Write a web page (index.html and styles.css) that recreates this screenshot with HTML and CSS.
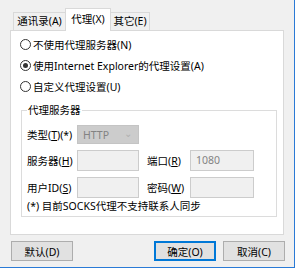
FILE: index.html
```html
<!DOCTYPE html>
<html lang="zh-CN">
<head>
<meta charset="UTF-8">
<title>代理设置</title>
<link rel="stylesheet" href="styles.css">
</head>
<body>

<div class="window">
<div class="tabs">
<div class="tab tab-first">通讯录(A)</div>
<div class="tab tab-active">代理(X)</div>
<div class="tab tab-last">其它(E)</div>
</div>

<div class="panel">
<div class="radio"><span class="dot"></span>不使用代理服务器(N)</div>
<div class="radio"><span class="dot checked"></span>使用Internet Explorer的代理设置(A)</div>
<div class="radio"><span class="dot"></span>自定义代理设置(U)</div>

<fieldset class="group">
<legend>代理服务器</legend>
<div class="grid">
<div class="label">类型(<u>T</u>)(*)</div>
<div class="select"><span>HTTP</span><span class="chev">&#8964;</span></div>
<div></div><div></div><div></div>

<div class="label">服务器(<u>H</u>)</div>
<div class="input"></div>
<div></div>
<div class="label">端口(<u>R</u>)</div>
<div class="input">1080</div>

<div class="label">用户ID(<u>S</u>)</div>
<div class="input"></div>
<div></div>
<div class="label">密码(<u>W</u>)</div>
<div class="input"></div>
</div>
<div class="note">(*) 目前SOCKS代理不支持联系人同步</div>
</fieldset>
</div>

<div class="buttons">
<button>默认(D)</button>
<div class="right">
<button class="default">确定(O)</button>
<button>取消(C)</button>
</div>
</div>
</div>

</body>
</html>
```

FILE: styles.css
```css
html {
background-color: #fff;
}

body {
margin: 0;
padding: 0;
font-family: "Noto Sans", "Noto Sans CJK SC", sans-serif;
font-size: 10.5px;
color: #000;
}

.window {
width: 295px;
height: 268px;
box-sizing: border-box;
background-color: #f0f0f0;
border-right: 1px solid #2a7ad6;
border-bottom: 1px solid #2a7ad6;
display: flex;
flex-direction: column;
}

/* tabs */
.tabs {
display: flex;
align-items: flex-end;
height: 22px;
margin-top: 8px;
padding-left: 13px;
}

.tab {
box-sizing: border-box;
height: 18px;
line-height: 17px;
text-align: center;
border: 1px solid #d9d9d9;
border-bottom: 0;
background-color: #f0f0f0;
}

.tab-first {
width: 52px;
border-right: 0;
}

.tab-active {
width: 46px;
height: 23px;
line-height: 20px;
background-color: #fff;
margin-bottom: -1px;
position: relative;
z-index: 1;
}

.tab-last {
width: 39px;
border-left: 0;
}

/* panel */
.panel {
margin: 0 10px 0 10px;
border: 1px solid #d9d9d9;
background-color: #fff;
padding: 3px 6px 17px 9px;
}

.radio {
display: flex;
align-items: center;
height: 21px;
}

.dot {
box-sizing: border-box;
width: 11px;
height: 11px;
border: 1px solid #333;
border-radius: 50%;
margin-right: 2px;
display: flex;
align-items: center;
justify-content: center;
}

.dot.checked::after {
content: "";
width: 5px;
height: 5px;
border-radius: 50%;
background-color: #333;
}

.group {
margin: 6px 0 0 1px;
padding: 8px 5px 3px 5px;
border: 1px solid #dcdcdc;
}

.group legend {
padding: 0 1px;
margin-left: 0;
line-height: 14px;
}

.grid {
display: grid;
grid-template-columns: 50px 62px 8px 43px 64px;
grid-template-rows: 19px 21px 21px;
row-gap: 6px;
align-items: center;
}

.label {
white-space: nowrap;
}

.select {
box-sizing: border-box;
height: 19px;
background-color: #cccccc;
border: 1px solid #c4c4c4;
color: #838383;
display: flex;
align-items: center;
justify-content: space-between;
padding: 0 6px 0 5px;
}

.chev {
color: #b0b0b0;
font-size: 10px;
line-height: 10px;
margin-top: -4px;
}

.input {
box-sizing: border-box;
height: 21px;
background-color: #f0f0f0;
border: 1px solid #cccccc;
color: #838383;
line-height: 19px;
padding-left: 5px;
}

.note {
margin-top: 1px;
line-height: 14px;
}

/* buttons */
.buttons {
display: flex;
justify-content: space-between;
margin-top: 6px;
padding: 0 9px 0 11px;
}

.right {
display: flex;
gap: 7px;
}

button {
box-sizing: border-box;
width: 62px;
height: 20px;
padding: 0;
font-family: inherit;
font-size: inherit;
color: #000;
background-color: #e1e1e1;
border: 1px solid #adadad;
}

button.default {
border-color: #0078d7;
box-shadow: inset 0 0 0 1px #0078d7;
}
```
